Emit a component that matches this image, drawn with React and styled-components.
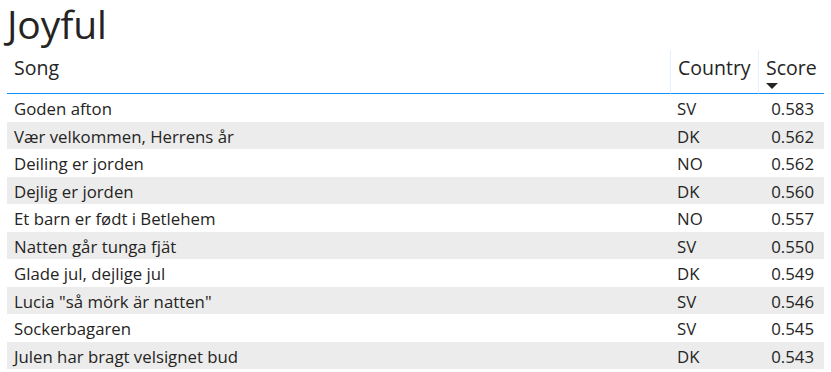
import React from "react";
import styled, { createGlobalStyle } from "styled-components";

const Global = createGlobalStyle`
  html, body { margin: 0; padding: 0; background: #fff; }
  body { font-family: "Open Sans", "Noto Sans", sans-serif; color: #252423; }
`;

const Page = styled.div`
  width: 831px;
  height: 372px;
  overflow: hidden;
  padding: 0 7px;
  box-sizing: border-box;
`;

const Title = styled.h1`
  margin: 0;
  height: 50px;
  font-family: "Open Sans", sans-serif;
  font-weight: 500;
  font-size: 39px;
  line-height: 48px;
  color: #252423;
  letter-spacing: -0.1px;
`;

const Table = styled.div`
  width: 817px;
  display: grid;
  grid-template-columns: 663px 88px 1fr;
`;

const HeadCell = styled.div`
  height: 44px;
  box-sizing: border-box;
  padding: 4px 7px 0;
  font-size: 19.5px;
  line-height: 28px;
  white-space: nowrap;
  border-bottom: 1px solid #118dff;
  border-left: ${(p) => (p.$sep ? "1px solid #e3f0fd" : "none")};
  position: relative;
`;

const SortArrow = styled.span`
  position: absolute;
  left: 7px;
  top: 33px;
  width: 0;
  height: 0;
  border-left: 6px solid transparent;
  border-right: 6px solid transparent;
  border-top: 6px solid #252423;
`;

const Cell = styled.div`
  height: 27.5px;
  box-sizing: border-box;
  display: flex;
  align-items: center;
  justify-content: ${(p) => (p.$right ? "flex-end" : "flex-start")};
  padding: ${(p) => (p.$right ? "2px 10px 0 7px" : "2px 7px 0")};
  font-size: 16.8px;
  background: ${(p) => (p.$alt ? "#ececec" : "#ffffff")};
  white-space: nowrap;
`;

const rows = [
  ["Goden afton", "SV", "0.583"],
  ["Vær velkommen, Herrens år", "DK", "0.562"],
  ["Deiling er jorden", "NO", "0.562"],
  ["Dejlig er jorden", "DK", "0.560"],
  ["Et barn er født i Betlehem", "NO", "0.557"],
  ["Natten går tunga fjät", "SV", "0.550"],
  ["Glade jul, dejlige jul", "DK", "0.549"],
  ['Lucia "så mörk är natten"', "SV", "0.546"],
  ["Sockerbagaren", "SV", "0.545"],
  ["Julen har bragt velsignet bud", "DK", "0.543"],
];

export default function App() {
  return (
    <Page>
      <Global />
      <Title>Joyful</Title>
      <Table>
        <HeadCell>Song</HeadCell>
        <HeadCell $sep>Country</HeadCell>
        <HeadCell $sep>
          Score
          <SortArrow />
        </HeadCell>
        {rows.map(([song, country, score], i) => (
          <React.Fragment key={song}>
            <Cell $alt={i % 2 === 1}>{song}</Cell>
            <Cell $alt={i % 2 === 1}>{country}</Cell>
            <Cell $alt={i % 2 === 1} $right>{score}</Cell>
          </React.Fragment>
        ))}
      </Table>
    </Page>
  );
}
